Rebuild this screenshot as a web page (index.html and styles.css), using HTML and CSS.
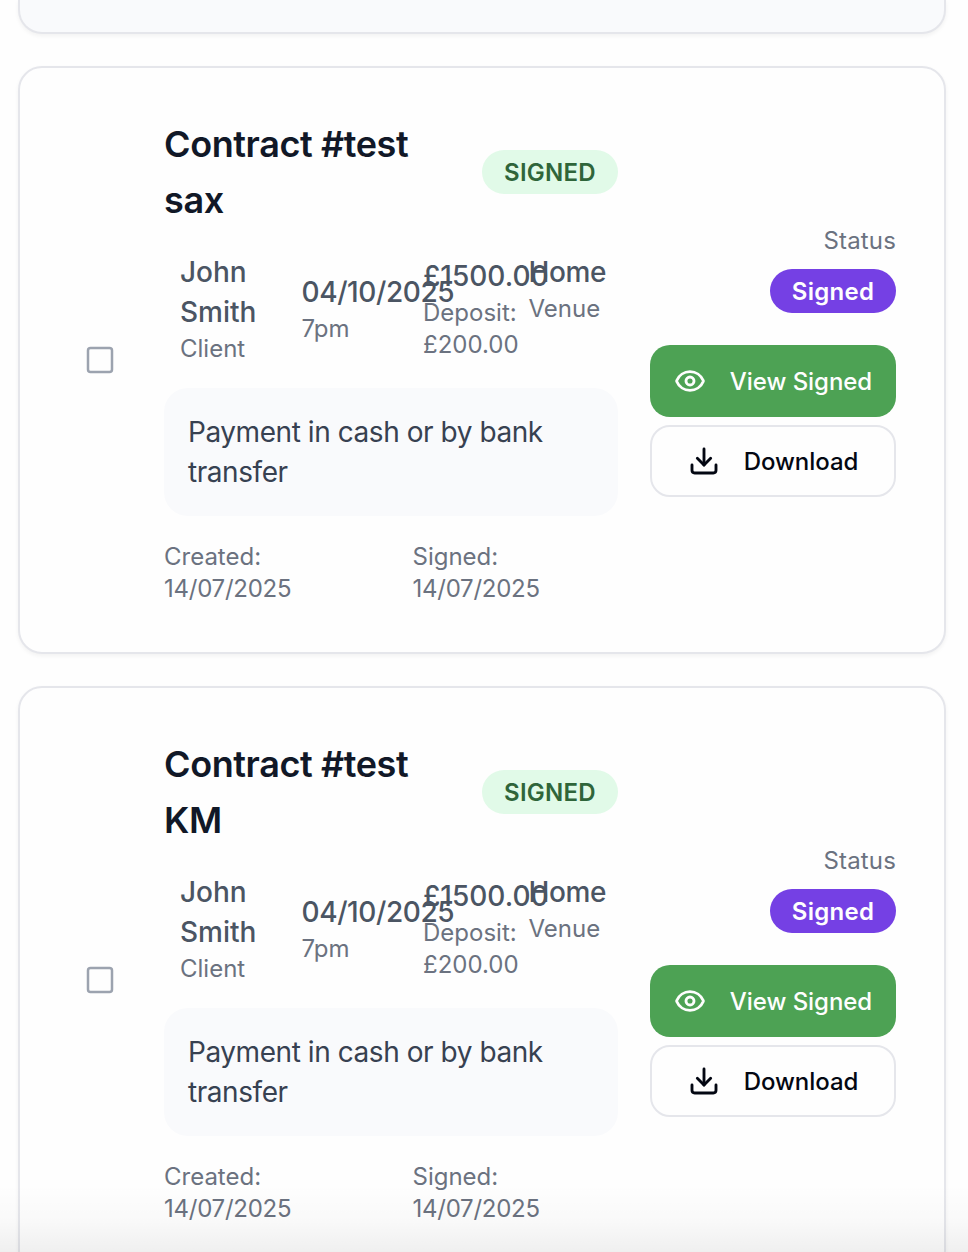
FILE: index.html
```
<!DOCTYPE html>
<html lang="en">
<head>
<meta charset="utf-8">
<title>Contracts</title>
<link rel="stylesheet" href="styles.css">
</head>
<body>
<svg class="sprite" aria-hidden="true">
  <symbol id="eye" viewBox="0 0 24 24"><path d="M2.06 12.35a1 1 0 0 1 0-.7 10.75 10.75 0 0 1 19.88 0 1 1 0 0 1 0 .7 10.75 10.75 0 0 1-19.88 0"/><circle cx="12" cy="12" r="3"/></symbol>
  <symbol id="download" viewBox="0 0 24 24"><path d="M21 15v4a2 2 0 0 1-2 2H5a2 2 0 0 1-2-2v-4"/><path d="M7 10l5 5 5-5"/><path d="M12 15V3"/></symbol>
</svg>
<main class="list">
  <section class="card card-previous"></section>

  <article class="card contract">
    <svg class="checkbox" role="checkbox" aria-checked="false" viewBox="0 0 28 28"><rect x="2" y="2" width="24" height="24" rx="2.5"/></svg>
    <div class="body">
      <header class="heading">
        <h2 class="title">Contract #test sax</h2>
        <span class="badge badge-green">SIGNED</span>
      </header>
      <div class="facts">
        <div class="fact"><p class="value value-name">John Smith</p><p class="label">Client</p></div>
        <div class="fact"><p class="value">04/10/2025</p><p class="label">7pm</p></div>
        <div class="fact"><p class="value value-price">£1500.00</p><p class="label">Deposit: £200.00</p></div>
        <div class="fact fact-venue"><p class="value">Home</p><p class="label">Venue</p></div>
      </div>
      <p class="notes">Payment in cash or by bank transfer</p>
      <footer class="dates">
        <p class="label date">Created: <span class="day">14/07/2025</span></p>
        <p class="label date">Signed: <span class="day">14/07/2025</span></p>
      </footer>
    </div>
    <div class="actions">
      <span class="label label-status">Status</span>
      <span class="badge badge-purple">Signed</span>
      <button class="button button-view"><svg class="icon"><use href="#eye"/></svg><span class="caption">View Signed</span></button>
      <button class="button button-download"><svg class="icon"><use href="#download"/></svg><span class="caption">Download</span></button>
    </div>
  </article>

  <article class="card contract">
    <svg class="checkbox" role="checkbox" aria-checked="false" viewBox="0 0 28 28"><rect x="2" y="2" width="24" height="24" rx="2.5"/></svg>
    <div class="body">
      <header class="heading">
        <h2 class="title">Contract #test KM</h2>
        <span class="badge badge-green">SIGNED</span>
      </header>
      <div class="facts">
        <div class="fact"><p class="value value-name">John Smith</p><p class="label">Client</p></div>
        <div class="fact"><p class="value">04/10/2025</p><p class="label">7pm</p></div>
        <div class="fact"><p class="value value-price">£1500.00</p><p class="label">Deposit: £200.00</p></div>
        <div class="fact fact-venue"><p class="value">Home</p><p class="label">Venue</p></div>
      </div>
      <p class="notes">Payment in cash or by bank transfer</p>
      <footer class="dates">
        <p class="label date">Created: <span class="day">14/07/2025</span></p>
        <p class="label date">Signed: <span class="day">14/07/2025</span></p>
      </footer>
    </div>
    <div class="actions">
      <span class="label label-status">Status</span>
      <span class="badge badge-purple">Signed</span>
      <button class="button button-view"><svg class="icon"><use href="#eye"/></svg><span class="caption">View Signed</span></button>
      <button class="button button-download"><svg class="icon"><use href="#download"/></svg><span class="caption">Download</span></button>
    </div>
  </article>
</main>
<div class="fade"></div>
</body>
</html>
```
FILE: styles.css
```
* { box-sizing: border-box; margin: 0; padding: 0; }
html, body { height: 1252px; overflow: hidden; }
body { position: relative; background: #fefefe; font-family: Inter, "Liberation Sans", sans-serif; color: #4b5563; }
.sprite { display: none; }
.list { display: flex; flex-direction: column; gap: 32px; padding: 0 22px 0 18px; }
.card { flex: none; border: 2px solid #e5e6eb; border-radius: 24px; background: #fefefe; box-shadow: 0 2px 4px rgba(0, 0, 0, .05); }
.card-previous { height: 34px; border-top: 0; border-radius: 0 0 24px 24px; background: #f9fafc; }
.contract { display: flex; align-items: center; height: 588px; padding: 48px 48px 48px 66px; }
.checkbox { flex: none; width: 28px; height: 28px; margin-right: 50px; fill: none; stroke: #9ca3af; stroke-width: 2.5; }
.body { flex: none; width: 454px; }
.heading { display: flex; align-items: center; justify-content: space-between; }
.title { width: 290px; font-size: 36px; line-height: 56px; font-weight: 600; letter-spacing: -.4px; color: #111827; }
.badge { display: flex; align-items: center; justify-content: center; height: 44px; padding-top: 2px; border-radius: 22px; font-size: 24px; line-height: 32px; font-weight: 600; letter-spacing: .25px; }
.badge-green { width: 136px; background: #e1fae8; color: #2f653a; }
.badge-purple { width: 126px; margin: 12px 0 32px; background: #7540e4; color: #fefefe; }
.facts { display: grid; grid-template-columns: repeat(4, 89.5px); column-gap: 32px; align-items: center; height: 112px; margin: 24px 0; }
.fact { padding-left: 16px; }
.fact-venue { align-self: start; padding-left: 0; }
.value { font-size: 28px; line-height: 40px; font-weight: 500; letter-spacing: -.4px; }
.value-name { letter-spacing: 0; }
.value-price { letter-spacing: 0; }
.label { padding-top: 1px; margin-bottom: -1px; font-size: 24px; line-height: 32px; color: #6b7280; letter-spacing: 0; }
.label-status { padding-top: 0; margin-bottom: 0; letter-spacing: .15px; }
.notes { height: 128px; padding: 24px; border-radius: 24px; background: #f9fafc; color: #374151; font-size: 28px; line-height: 40px; letter-spacing: -.44px; }
.dates { display: grid; grid-template-columns: 248.5px 1fr; margin-top: 24px; }
.date { width: 140px; }
.day { letter-spacing: -.25px; }
.actions { display: flex; flex-direction: column; align-items: flex-end; width: 246px; margin: 2px 0 0 32px; }
.button { display: flex; align-items: center; justify-content: center; gap: 24px; width: 246px; height: 72px; border: 0; border-radius: 20px; font: 500 24px/32px Inter, sans-serif; letter-spacing: -.05px; }
.button-view { background: #4da254; color: #fefefe; }
.button-download { margin-top: 8px; border: 2px solid #e5e6eb; background: #fefefe; color: #030712; }
.caption { padding-top: 2px; }
.icon { flex: none; width: 32px; height: 32px; fill: none; stroke: currentColor; stroke-width: 2.15; stroke-linecap: round; stroke-linejoin: round; }
.fade { position: absolute; left: 0; right: 0; bottom: 0; height: 68px; background: linear-gradient(rgba(0, 0, 0, 0), rgba(0, 0, 0, .018) 55%, rgba(0, 0, 0, .06)); }
```
